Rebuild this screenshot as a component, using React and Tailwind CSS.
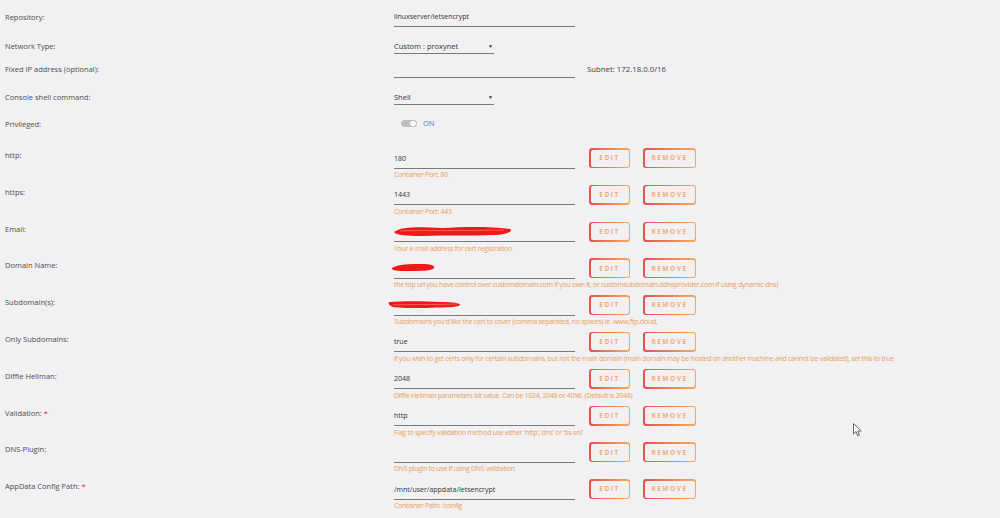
import React from 'react';

const FONT = { fontFamily: '"Open Sans", "Noto Sans", sans-serif' };

const ROWS = [
  { label: 'http:', value: '180', hint: 'Container Port: 80' },
  { label: 'https:', value: '1443', hint: 'Container Port: 443' },
  { label: 'Email:', value: '', hint: 'Your e-mail address for cert registration', scribble: 'email' },
  {
    label: 'Domain Name:',
    value: '',
    hint: 'the top url you have control over customdomain.com if you own it, or customsubdomain.ddnsprovider.com if using dynamic dns)',
    scribble: 'domain',
  },
  {
    label: 'Subdomain(s):',
    value: '',
    hint: "Subdomains you'd like the cert to cover (comma separated, no spaces) ie. www,ftp,cloud,",
    scribble: 'sub',
  },
  {
    label: 'Only Subdomains:',
    value: 'true',
    hint: 'if you wish to get certs only for certain subdomains, but not the main domain (main domain may be hosted on another machine and cannot be validated), set this to true',
  },
  {
    label: 'Diffie Hellman:',
    value: '2048',
    hint: 'Diffie Hellman parameters bit value. Can be 1024, 2048 or 4096. (Default is 2048)',
  },
  {
    label: 'Validation:',
    required: true,
    value: 'http',
    hint: "Flag to specify validation method use either 'http','dns' or 'tls-sni'",
  },
  { label: 'DNS-Plugin:', value: '', hint: 'DNS plugin to use if using DNS validation' },
  { label: 'AppData Config Path:', required: true, value: '/mnt/user/appdata/letsencrypt', hint: 'Container Path: /config' },
];

function Scribble({ kind }) {
  if (kind === 'email') {
    return (
      <svg className="absolute left-[-2px] top-[-4px]" width="122" height="14" viewBox="0 0 122 14">
        <path d="M2 8 C10 2 30 3 50 4 C70 3 95 2 118 5 C122 7 115 11 100 11 C80 12 55 11 30 12 C15 12 5 11 3 9 Z" fill="#f21818" />
        <path d="M8 7 C30 6 60 7 112 6" stroke="#ff5a5a" strokeWidth="1" fill="none" />
      </svg>
    );
  }
  if (kind === 'domain') {
    return (
      <svg className="absolute left-[-4px] top-[-2px]" width="46" height="11" viewBox="0 0 46 11">
        <path d="M2 6 C8 2 20 2 32 2 C40 2 45 3 44 6 C42 9 30 9 18 9 C10 9 4 9 2 7 Z" fill="#f21818" />
      </svg>
    );
  }
  return (
    <svg className="absolute left-[-7px] top-[-2px]" width="76" height="11" viewBox="0 0 76 11">
      <path d="M2 3 C15 2 35 2 55 3 C65 3 74 4 73 6 C70 9 55 8 40 9 C25 9 12 9 6 8 C3 7 1 5 2 3 Z" fill="#f21818" />
      <path d="M6 6 C25 5 45 6 70 5" stroke="#ff6a6a" strokeWidth="0.8" fill="none" />
    </svg>
  );
}

function Button({ children, width }) {
  return (
    <div className={`${width} h-[20px] rounded-[3px] bg-gradient-to-r from-[#e05252] to-[#f4aa5c] p-[1.5px]`}>
      <div className="flex h-full w-full items-center justify-center rounded-[2px] bg-[#f1f0f3] text-[6.5px] font-bold tracking-[1.5px] text-[#f2ad7a]">
        {children}
      </div>
    </div>
  );
}

function EditRow({ row }) {
  return (
    <div className="flex h-[36.8px]">
      <div className="w-[389px] pt-[1px] text-[7.5px] leading-[12px] text-[#4d4d4d]">
        {row.label}
        {row.required && <span className="text-[#e22828]"> *</span>}
      </div>
      <div className="flex flex-col">
        <div className="flex">
          <div className="relative w-[181px] border-b border-[#7a7a7a] pt-[4.5px] pb-[3px] text-[7px] leading-[12px] text-[#333]">
            {row.value || '\u00a0'}
            {row.scribble && (
              <div className="absolute left-0 top-[6px]">
                <Scribble kind={row.scribble} />
              </div>
            )}
          </div>
          <div className="ml-[14px]">
            <Button width="w-[41px]">EDIT</Button>
          </div>
          <div className="ml-[13px]">
            <Button width="w-[53px]">REMOVE</Button>
          </div>
        </div>
        <div className="mt-[0.5px] whitespace-nowrap text-[7px] leading-[12px] tracking-[-0.3px] text-[#eba257]">{row.hint}</div>
      </div>
    </div>
  );
}

function Label({ children, pt = 'pt-[6px]' }) {
  return <div className={`w-[389px] ${pt} text-[7.5px] leading-[12px] text-[#4d4d4d]`}>{children}</div>;
}

export default function App() {
  return (
    <div className="relative h-[518px] w-[1000px] overflow-hidden bg-[#f1f0f3] pl-[5px]" style={FONT}>
      {/* Repository */}
      <div className="flex h-[34px]">
        <Label pt="pt-[11px]">Repository:</Label>
        <div className="mt-[11px] h-fit w-[181px] border-b border-[#7a7a7a] pb-[3px] text-[7px] leading-[12px] text-[#333]">
          linuxserver/letsencrypt
        </div>
      </div>

      {/* Network type */}
      <div className="flex h-[23px]">
        <Label>Network Type:</Label>
        <div className="mt-[6px] flex h-fit w-[100px] items-center justify-between border-b border-[#7a7a7a] pb-[1px] text-[7.5px] leading-[12px] text-[#333]">
          <span>Custom : proxynet</span>
          <span className="mr-[1px] text-[5px]">▼</span>
        </div>
      </div>

      {/* Fixed IP */}
      <div className="flex h-[28px]">
        <Label>Fixed IP address (optional):</Label>
        <div className="mt-[6px] h-[15px] w-[181px] border-b border-[#7a7a7a]" />
        <div className="ml-[12px] pt-[6px] text-[7.8px] leading-[12px] text-[#444]">Subnet: 172.18.0.0/16</div>
      </div>

      {/* Console */}
      <div className="flex h-[27px]">
        <Label>Console shell command:</Label>
        <div className="mt-[6px] flex h-fit w-[100px] items-center justify-between border-b border-[#7a7a7a] pb-[1px] text-[7.5px] leading-[12px] text-[#333]">
          <span>Shell</span>
          <span className="mr-[1px] text-[5px]">▼</span>
        </div>
      </div>

      {/* Privileged */}
      <div className="flex h-[36px]">
        <Label>Privileged:</Label>
        <div className="flex h-fit items-center pt-[5px]">
          <div className="ml-[7px] flex h-[7px] w-[16px] items-center justify-end rounded-full bg-[#bdbdbd]">
            <div className="h-[7px] w-[8px] rounded-full border border-[#bdbdbd] bg-white" />
          </div>
          <span className="ml-[6px] text-[7.5px] leading-[12px] text-[#4b7cc4]">ON</span>
        </div>
      </div>

      {ROWS.map((row) => (
        <EditRow key={row.label} row={row} />
      ))}

      {/* mouse cursor */}
      <svg className="absolute left-[853px] top-[423px]" width="10" height="14" viewBox="0 0 10 14">
        <path d="M0.5 0.5 L0.5 11 L3 8.6 L4.8 12.8 L6.4 12.1 L4.7 8 L8.2 8 Z" fill="#fff" stroke="#666" strokeWidth="1" />
      </svg>
    </div>
  );
}
